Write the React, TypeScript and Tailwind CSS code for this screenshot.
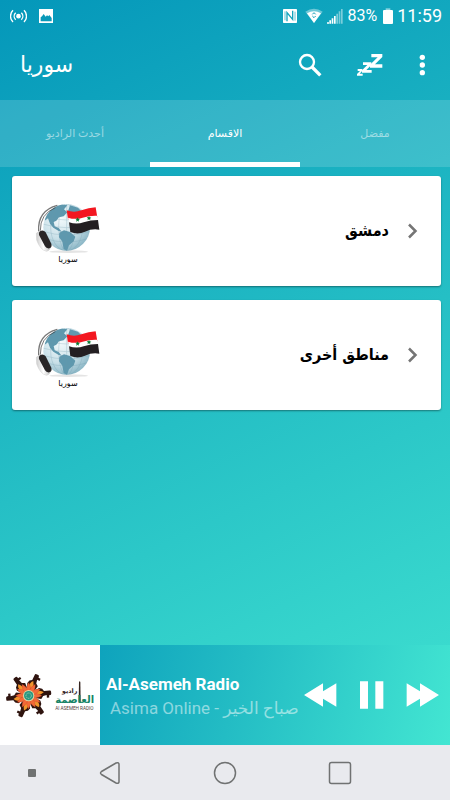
import React from 'react';

interface Station {
  id: string;
  name: string;
}

const stations: Station[] = [
  { id: 'damascus', name: 'دمشق' },
  { id: 'other', name: 'مناطق أخرى' },
];

const tabs = [
  { id: 'latest', label: 'أحدث الراديو' },
  { id: 'sections', label: 'الاقسام' },
  { id: 'favourites', label: 'مفضل' },
];

function StatusBar() {
  return (
    <div className="flex h-8 items-center justify-between px-2 text-white">
      <div className="flex items-center gap-3 pl-0.5">
        <svg className="h-4 w-[17px]" viewBox="0 0 51 48" fill="none" stroke="currentColor" strokeWidth="4">
          <path d="M9 7C-1 17-1 32 9 42M17 14c-6 6-6 15 0 21M42 7c10 10 10 25 0 35M34 14c6 6 6 15 0 21" />
          <circle cx="25.500" cy="24.500" r="5" fill="currentColor" />
        </svg>
        <svg className="h-3.5 w-3.5" viewBox="0 0 42 42" fill="none">
          <path d="M0 0h42v42H0z" fill="currentColor" />
          <path d="M5 37V25l4-3 5-7 6 8 4-4 4 3 3-4 7 9v10z" fill="#0999b9" />
        </svg>
      </div>
      <div className="flex items-center gap-1">
        <svg className="mr-1 h-3.5 w-3.5" viewBox="0 0 42 42">
          <rect width="42" height="42" rx="2" fill="currentColor" />
          <path d="M12 37V11l17 20V5" fill="none" stroke="#13a4bd" strokeWidth="4" />
          <path d="M6 34V7M36 8v27" stroke="#13a4bd" strokeWidth="2" />
        </svg>
        <svg className="h-4 w-[18px]" viewBox="0 0 54 48">
          <path d="M1 11Q27-7 53 11L27 45z" fill="currentColor" opacity=".4" />
          <path d="M6 16q21-13 42 0L27 45z" fill="currentColor" />
          <path d="M22 19l5-5 5 5M22 24l5 5 5-5" fill="none" stroke="#149fb9" strokeWidth="3" />
        </svg>
        <svg className="h-4 w-4" viewBox="0 0 48 48" fill="currentColor">
          <path d="M0 43h6v4H0zM7 37h5v10H7zM14 31h5v16h-5z" />
          <path d="M21 24h5v23h-5z" />
          <path d="M28 17h5v30h-5zM35 10h5v37h-5zM42 3h5v44h-5z" opacity=".45" />
        </svg>
        <span className="text-[16px] leading-5">83%</span>
        <svg className="ml-0.5 h-4 w-2.5" viewBox="0 0 30 48" fill="currentColor">
          <path d="M8 1h14v5H8z" opacity=".5" />
          <path d="M3 6h24q3 0 3 3v36q0 3-3 3H3q-3 0-3-3V9q0-3 3-3z" />
        </svg>
        <span className="text-[18px] leading-5">11:59</span>
      </div>
    </div>
  );
}

function AppBar() {
  return (
    <header className="flex h-[68px] items-center pb-0.5 pl-5 pr-2 text-white">
      <h1 dir="rtl" className="mr-auto text-[22px] leading-8">سوريا</h1>
      <button type="button" aria-label="Search" className="flex h-10 w-10 items-center justify-center">
        <svg className="h-6 w-6" viewBox="0 0 72 72" fill="none" stroke="currentColor" strokeWidth="7">
          <circle cx="27" cy="27" r="21" />
          <path d="M42 42l25 25" strokeWidth="10" />
        </svg>
      </button>
      <button type="button" aria-label="Sleep timer" className="ml-5 flex h-10 w-10 items-center justify-center">
        <svg className="h-6 w-[26px]" viewBox="0 0 78 72" fill="currentColor">
          <path d="M43 3h33v9L54 34h22v10H39v-9l23-22H43z" />
          <path d="M18 28h25v8L28 51h16v8H15v-7l16-16H18z" />
          <path d="M2 48h14v5l-8 9h9v6H0v-5l9-9H2z" />
        </svg>
      </button>
      <button type="button" aria-label="More options" className="ml-3 flex h-10 w-10 items-center justify-center">
        <svg className="h-6 w-6" viewBox="0 0 72 72" fill="currentColor">
          <circle cx="37" cy="13" r="8" />
          <circle cx="37" cy="36" r="8" />
          <circle cx="37" cy="59" r="8" />
        </svg>
      </button>
    </header>
  );
}

function GlobeLogo() {
  return (
    <div className="flex w-[72px] flex-col items-center">
      <svg className="h-[58px] w-[72px]" viewBox="36 22 216 174">
        <defs>
          <radialGradient id="globe" cx="38%" cy="30%" r="75%">
            <stop offset="0" stopColor="#f3fafc" />
            <stop offset=".6" stopColor="#c9e0e8" />
            <stop offset="1" stopColor="#86b3c3" />
          </radialGradient>
          <linearGradient id="cup" x1="0" y1="0" x2="1" y2="0">
            <stop offset="0" stopColor="#ccc" />
            <stop offset=".5" stopColor="#fff" />
            <stop offset="1" stopColor="#bbb" />
          </linearGradient>
          <clipPath id="globe-clip">
            <circle cx="140" cy="116" r="70" />
          </clipPath>
        </defs>
        <ellipse cx="146" cy="189" rx="58" ry="4" fill="#e4e4e4" />
        <circle cx="140" cy="116" r="70" fill="url(#globe)" />
        <g clipPath="url(#globe-clip)">
          <path
            d="M78 80q12-24 38-34l26 4-10 12 10 9-11 12-14 3-8 10-8 4 3 13 12 5 9 11-9-2-16-10-10-12-6-16-10 7zM118 132l14-7 18 5 16 14-5 14-14 12-6 16-10-5-4-22-10-13zM150 50l24 7 26 28 10 35-18-6-12 8-6-14 4-16-18-12-16-12z"
            fill="#5f98ae"
          />
          <g fill="none" stroke="#6896a8" strokeWidth="1.500" opacity=".5">
            <path d="M70 84q70 20 140 0M68 106q72 22 144 0M68 128q72 22 144 0M76 150q64 20 128 0M140 45v142" />
            <ellipse cx="140" cy="116" rx="24" ry="71" />
            <ellipse cx="140" cy="116" rx="48" ry="71" />
          </g>
        </g>
        <path d="M56 128Q52 66 112 50" fill="none" stroke="#777" strokeWidth="4" />
        <path d="M61 126Q60 76 106 57" fill="none" stroke="#333" strokeWidth="2" />
        <path d="M49 134q8-9 17-5l26 42q-1 15-13 17-19-5-29-34z" fill="url(#cup)" stroke="#ccc" strokeWidth="1.500" />
        <path d="M60 128q9-6 17 3l17 34q3 11-6 14-9 1-13-6l-18-34q-2-8 3-11z" fill="#292627" />
        <path d="M140 65q22 8 44 0t43-9l5 30q-22-3-43 6t-45 0z" fill="#f31720" />
        <path d="M144 87q23 7 44 0t43-6l4 20q-22-2-43 6t-43 0z" fill="#fff" />
        <path d="M147 101q23 7 44 0t43-7l4 29q-22-4-43 6t-44 1z" fill="#241f22" />
        <path d="M173 86l2 4 5 1-4 3 1 5-4-3-5 3 2-5-4-4 5 0zM207 82l2 4 5 1-4 3 1 5-4-3-5 3 2-5-4-4 5 0z" fill="#087c35" />
      </svg>
      <span dir="rtl" className="text-[8px] leading-3 text-black">سوريا</span>
    </div>
  );
}

function StationCard({ name }: { name: string }) {
  return (
    <button
      type="button"
      className="flex h-[110px] w-full items-center rounded-[3px] bg-white pl-5 pr-4 shadow-[0_1px_2px_rgba(0,0,0,0.4)]"
    >
      <GlobeLogo />
      <span dir="rtl" className="ml-auto font-['DejaVu_Sans_Condensed','DejaVu_Sans',sans-serif] text-[16px] font-bold leading-7 text-black">
        {name}
      </span>
      <svg className="ml-3 h-6 w-6" viewBox="0 0 24 24" fill="none" stroke="#757575" strokeWidth="2.500">
        <path d="M8 5.500l6.500 6.500L8 18.500" />
      </svg>
    </button>
  );
}

function StationArtwork() {
  const arms = [-5, 55, 115, 175, 235, 295];
  const petals = [0, 30, 60, 90, 120, 150, 180, 210, 240, 270, 300, 330];
  return (
    <svg className="h-[100px] w-[100px] shrink-0 bg-white" viewBox="0 15 300 300">
      <g transform="translate(86 167)">
        {arms.map((angle) => (
          <g key={angle} transform={`rotate(${angle})`}>
            <path d="M16-12l17-8 9 3 5 7h17q4 0 4 4v6q0 4-5 4h-2v7h-7V3l-11 2-6 8-14-3z" fill="#2f140f" />
            <path d="M20-8Q36-17 46-6 37 2 24 0z" fill="#f0952b" />
          </g>
        ))}
        {petals.map((angle) => (
          <path key={angle} transform={`rotate(${angle})`} d="M10-5Q26-9 39 0 26 9 10 5z" fill="#f26a38" stroke="#d5492b" strokeWidth="1" />
        ))}
        <circle r="17" fill="#e1d6a5" />
        <circle r="14" fill="#289781" />
        <circle r="8" fill="none" stroke="#b5dcbf" strokeWidth="3" strokeDasharray="3 3" />
      </g>
      <path d="M237 126q2-4 4 0l1 62h-6z" fill="#34241f" />
      <text x="209" y="159" textAnchor="middle" fontSize="19" fontWeight="bold" fill="#34241f">راديو</text>
      <text x="224" y="190" textAnchor="middle" fontSize="30" fontWeight="bold" fill="#168466">العاصمة</text>
      <text x="223" y="210" textAnchor="middle" fontSize="14" fill="#51403b">Al ASEMEH RADIO</text>
    </svg>
  );
}

function Player() {
  return (
    <section aria-label="Player" className="flex h-[100px] bg-linear-[105deg,#0092b8,#23bcc4_52%,#43e6d2] text-white">
      <StationArtwork />
      <div className="flex min-w-0 flex-1 flex-col pl-1.5 pt-[27px]">
        <span className="whitespace-nowrap text-[17px] font-bold leading-6">Al-Asemeh Radio</span>
        <span className="whitespace-nowrap pl-1 text-[17px] leading-6 text-white/50">
          Asima Online - <bdi>صباح الخير</bdi>
        </span>
      </div>
      <div className="flex shrink-0 items-center gap-4 pr-2.5">
        <button type="button" aria-label="Previous">
          <svg className="h-6 w-[34px]" viewBox="0 0 102 72" fill="currentColor">
            <path d="M0 36L57 1v24L97 1v70L57 47v24z" />
          </svg>
        </button>
        <button type="button" aria-label="Pause" className="px-0.5">
          <svg className="h-7 w-8" viewBox="0 0 96 84" fill="currentColor">
            <path d="M12 1h24v82H12zM58 1h24v82H58z" />
          </svg>
        </button>
        <button type="button" aria-label="Next">
          <svg className="h-6 w-[34px]" viewBox="0 0 102 72" fill="currentColor">
            <path d="M99 36L42 1v24L2 1v70l40-24v24z" />
          </svg>
        </button>
      </div>
    </section>
  );
}

function NavigationBar() {
  return (
    <nav aria-label="System" className="grid h-[55px] grid-cols-[52px_1fr_1fr_1fr_52px] items-center justify-items-center bg-[#e9eaee] text-[#707272]">
      <span className="ml-3 h-2 w-2 rounded-[1px] bg-current" />
      <button type="button" aria-label="Back">
        <svg className="h-6 w-6" viewBox="0 0 24 24" fill="none" stroke="currentColor" strokeWidth="1.500">
          <path d="M3.500 10.500L18 2q2.500-1 3 1v18q-.5 2-3 1L3.500 13.500q-2-1.500 0-3z" />
        </svg>
      </button>
      <button type="button" aria-label="Home">
        <svg className="h-6 w-6" viewBox="0 0 24 24" fill="none" stroke="currentColor" strokeWidth="1.500">
          <circle cx="12" cy="12" r="10.500" />
        </svg>
      </button>
      <button type="button" aria-label="Recent apps">
        <svg className="h-6 w-6" viewBox="0 0 24 24" fill="none" stroke="currentColor" strokeWidth="1.500">
          <rect x="1.500" y="1.500" width="21" height="21" rx="2" />
        </svg>
      </button>
    </nav>
  );
}

export default function App() {
  const [active, setActive] = React.useState('sections');

  return (
    <div className="flex min-h-screen flex-col bg-linear-[155deg,#0497ba,#25bfc5_50%,#43e6d2] font-[Roboto,'DejaVu_Sans',sans-serif]">
      <StatusBar />
      <AppBar />

      <div role="tablist" className="grid h-[67px] grid-cols-3 bg-white/15">
        {tabs.map((tab) => (
          <button
            key={tab.id}
            type="button"
            role="tab"
            dir="rtl"
            aria-selected={tab.id === active}
            onClick={() => setActive(tab.id)}
            className={`border-y-[5px] border-t-transparent text-[11px] leading-4 ${
              tab.id === active ? 'border-b-white text-white' : 'border-b-transparent text-white/50'
            }`}
          >
            {tab.label}
          </button>
        ))}
      </div>

      <main className="flex flex-1 flex-col gap-3.5 pl-3 pr-[9px] pt-[9px]">
        {stations.map((station) => (
          <StationCard key={station.id} name={station.name} />
        ))}
      </main>

      <Player />
      <NavigationBar />
    </div>
  );
}
